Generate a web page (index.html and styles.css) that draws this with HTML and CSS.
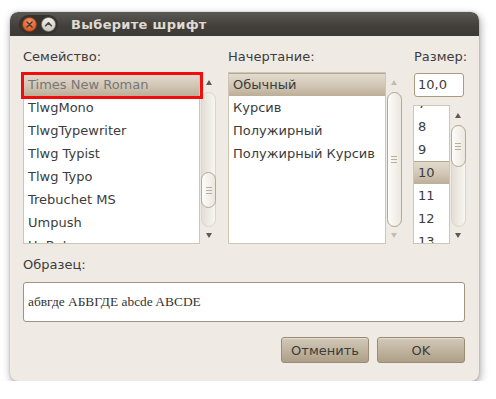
FILE: index.html
```html
<!DOCTYPE html>
<html lang="ru">
<head>
    <meta charset="UTF-8">
    <title>Выберите шрифт</title>
    <link rel="stylesheet" href="styles.css">
</head>
<body>
    <div class="window">
        <!-- Title bar -->
        <div class="titlebar">
            <div class="controls">
                <svg class="ctl" width="15" height="15" viewBox="0 0 15 15">
                    <defs>
                        <radialGradient id="closeGrad" cx="50%" cy="35%" r="65%">
                            <stop offset="0" stop-color="#f79a6e"/>
                            <stop offset="1" stop-color="#d9501c"/>
                        </radialGradient>
                    </defs>
                    <circle cx="7.5" cy="7.5" r="7" fill="url(#closeGrad)" stroke="#8a3a18" stroke-width="0.6"/>
                    <path d="M5 5 L10 10 M10 5 L5 10" stroke="#4a3a34" stroke-width="1.6" stroke-linecap="round"/>
                </svg>
                <svg class="ctl" width="15" height="15" viewBox="0 0 15 15">
                    <defs>
                        <linearGradient id="minGrad" x1="0" y1="0" x2="0" y2="1">
                            <stop offset="0" stop-color="#f4f2ee"/>
                            <stop offset="1" stop-color="#c9c5bd"/>
                        </linearGradient>
                    </defs>
                    <circle cx="7.5" cy="7.5" r="7" fill="url(#minGrad)" stroke="#6f6c66" stroke-width="0.6"/>
                    <path d="M4.6 8.8 L7.5 5.9 L10.4 8.8" fill="none" stroke="#4a4844" stroke-width="1.6" stroke-linecap="round" stroke-linejoin="round"/>
                </svg>
            </div>
            <div class="title">Выберите шрифт</div>
        </div>

        <div class="content">
            <div class="pickers">
                <!-- Family -->
                <div class="col family-col">
                    <div class="label">Семейство:</div>
                    <div class="pane family-pane">
                        <div class="list">
                            <div class="row selected dim">Times New Roman</div>
                            <div class="row">TlwgMono</div>
                            <div class="row">TlwgTypewriter</div>
                            <div class="row">Tlwg Typist</div>
                            <div class="row">Tlwg Typo</div>
                            <div class="row">Trebuchet MS</div>
                            <div class="row">Umpush</div>
                            <div class="row">UnBatang</div>
                        </div>
                        <div class="scroll">
                            <div class="arrow up"></div>
                            <div class="trough">
                                <div class="thumb family-thumb"><span></span><span></span><span></span></div>
                            </div>
                            <div class="arrow down"></div>
                        </div>
                        <div class="highlight"></div>
                    </div>
                </div>

                <!-- Style -->
                <div class="col style-col">
                    <div class="label">Начертание:</div>
                    <div class="pane style-pane">
                        <div class="list">
                            <div class="row selected">Обычный</div>
                            <div class="row">Курсив</div>
                            <div class="row">Полужирный</div>
                            <div class="row">Полужирный Курсив</div>
                        </div>
                        <div class="scroll">
                            <div class="arrow up off"></div>
                            <div class="trough">
                                <div class="thumb full-thumb"><span></span><span></span><span></span></div>
                            </div>
                            <div class="arrow down off"></div>
                        </div>
                    </div>
                </div>

                <!-- Size -->
                <div class="col size-col">
                    <div class="label">Размер:</div>
                    <div class="entry">10,0</div>
                    <div class="pane size-pane">
                        <div class="list">
                            <div class="list-inner">
                                <div class="row">7</div>
                                <div class="row">8</div>
                                <div class="row">9</div>
                                <div class="row selected">10</div>
                                <div class="row">11</div>
                                <div class="row">12</div>
                                <div class="row">13</div>
                            </div>
                        </div>
                        <div class="scroll size-scroll">
                            <div class="arrow up"></div>
                            <div class="trough">
                                <div class="thumb size-thumb"><span></span><span></span><span></span></div>
                            </div>
                            <div class="arrow down"></div>
                        </div>
                    </div>
                </div>
            </div>

            <div class="label sample-label">Образец:</div>
            <div class="preview">абвгде АБВГДЕ abcde ABCDE</div>

            <div class="buttons">
                <button class="btn">Отменить</button>
                <button class="btn">OK</button>
            </div>
        </div>
    </div>
</body>
</html>
```

FILE: styles.css
```css
* {
    margin: 0;
    padding: 0;
    box-sizing: border-box;
}

body {
    background: #fff;
    font-family: 'DejaVu Sans', sans-serif;
    font-size: 13px;
    color: #3c3c3c;
    overflow: hidden;
}

.window {
    margin: 12px 0 0 10px;
    width: 469px;
    height: 369px;
    background: #efebe4;
    border-radius: 8px;
    box-shadow: 1px 3px 8px rgba(0, 0, 0, 0.38), 0 0 2px rgba(0, 0, 0, 0.2);
    overflow: hidden;
}

/* Title bar */
.titlebar {
    height: 24px;
    display: flex;
    align-items: center;
    padding-left: 9px;
    background: linear-gradient(#5b5953, #423f3a 60%, #3c3b37);
    border-radius: 8px 8px 0 0;
}

.controls {
    display: flex;
    gap: 4px;
    padding: 2px 2px 2px 3px;
    background: #34322e;
    border-radius: 10px;
    margin-top: 1px;
}

.ctl {
    display: block;
}

.title {
    margin-left: 13px;
    font-weight: bold;
    color: #dfdbd2;
    letter-spacing: 0.3px;
}

/* Content */
.content {
    padding: 13px 13px 0 13px;
}

.pickers {
    display: flex;
}

.col {
    display: flex;
    flex-direction: column;
}

.family-col {
    width: 194px;
}

.style-col {
    width: 174px;
    margin-left: 11px;
}

.size-col {
    width: 52px;
    margin-left: 12px;
}

.label {
    height: 16px;
    line-height: 16px;
    margin-bottom: 7px;
}

.pane {
    position: relative;
    display: flex;
    height: 172px;
}

.list {
    flex: 1;
    background: #fff;
    border: 1px solid #cec5b5;
    overflow: hidden;
}

.row {
    height: 23px;
    line-height: 23px;
    padding-left: 4px;
    white-space: nowrap;
}

.row.selected {
    background: linear-gradient(#e2dbce, #d3c8b7 50%, #bcae98);
    border-top: 1px solid #b5a78f;
    line-height: 21px;
}

.row.dim {
    color: #777;
}

/* Scrollbars */
.scroll {
    width: 17px;
    display: flex;
    flex-direction: column;
    align-items: center;
}

.style-pane .scroll,
.size-scroll {
    width: 16px;
}

.arrow {
    width: 100%;
    display: flex;
    justify-content: center;
    align-items: center;
}

.arrow.up {
    height: 20px;
}

.arrow.down {
    height: 17px;
}

.arrow::before {
    content: '';
    border-left: 3.5px solid transparent;
    border-right: 3.5px solid transparent;
}

.arrow.up::before {
    border-bottom: 5px solid #5d5a55;
}

.arrow.down::before {
    border-top: 5px solid #5d5a55;
}

.arrow.off.up::before {
    border-bottom-color: #c2bcb2;
}

.arrow.off.down::before {
    border-top-color: #c2bcb2;
}

.trough {
    flex: 1;
    width: 15px;
    border: 1px solid #dbd5cb;
    border-radius: 8px;
    background: linear-gradient(to right, #e3ded5, #f8f6f2);
    display: flex;
    flex-direction: column;
}

.thumb {
    margin: -1px;
    border: 1px solid #b4a994;
    border-radius: 8px;
    background: linear-gradient(to right, #fdfcfa, #ece7de);
    display: flex;
    flex-direction: column;
    justify-content: center;
    align-items: center;
    gap: 2px;
}

.thumb span {
    width: 6px;
    height: 1px;
    background: #b9ae9c;
}

.family-thumb {
    margin-top: 79px;
    height: 36px;
}

.full-thumb {
    flex: 1;
}

.size-thumb {
    height: 42px;
}

/* Red annotation box over the selected family */
.highlight {
    position: absolute;
    left: -2px;
    top: 0;
    width: 182px;
    height: 27px;
    border: 3px solid #f20d0d;
}

/* Size column */
.entry {
    margin-top: 1px;
    width: 50px;
    height: 24px;
    line-height: 22px;
    padding-left: 3px;
    background: #fff;
    border: 1px solid #a99a80;
    border-radius: 3px;
}

.size-pane {
    margin-top: 8px;
    margin-left: -1px;
    height: 139px;
}

.size-pane .list {
    flex: none;
    width: 37px;
}

.list-inner {
    margin-top: -14px;
}

/* Sample */
.sample-label {
    margin-top: 13px;
    margin-bottom: 9px;
}

.preview {
    width: 442px;
    height: 40px;
    line-height: 38px;
    padding-left: 4px;
    background: #fff;
    border: 1px solid #a2957f;
    border-radius: 3px;
    font-family: 'Liberation Serif', serif;
    font-size: 13.4px;
    color: #333;
}

.buttons {
    display: flex;
    justify-content: flex-end;
    gap: 8px;
    margin-top: 15px;
    margin-right: 1px;
}

.btn {
    width: 88px;
    height: 26px;
    font-family: 'DejaVu Sans', sans-serif;
    font-size: 13px;
    color: #3c3c3c;
    border: 1px solid #998b74;
    border-radius: 3px;
    background: linear-gradient(#d2c9ba, #bfb29d 55%, #ad9f88);
    box-shadow: inset 0 1px 0 rgba(255, 255, 255, 0.35);
}
```
